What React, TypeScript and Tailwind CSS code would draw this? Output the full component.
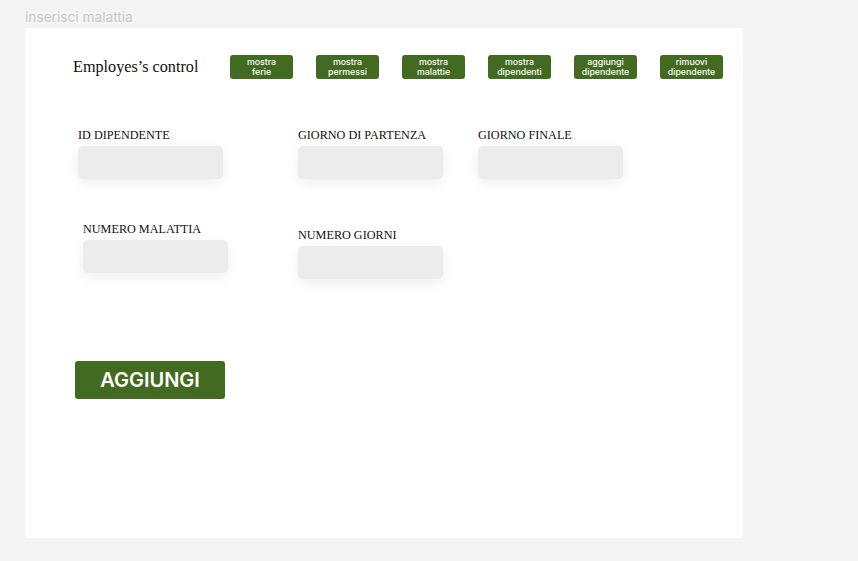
const navButtons = [
  ["mostra", "ferie"],
  ["mostra", "permessi"],
  ["mostra", "malattie"],
  ["mostra", "dipendenti"],
  ["aggiungi", "dipendente"],
  ["rimuovi", "dipendente"],
];

const Field = ({ label, className }: { label: string; className?: string }) => (
  <div className={`flex w-[145px] flex-col ${className ?? ""}`}>
    <label className="whitespace-nowrap font-['Liberation_Serif',serif] text-[12.2px] leading-[14px] text-[#111]">
      {label}
    </label>
    <input
      type="text"
      className="mt-[4px] h-[33px] w-[145px] rounded-[5px] bg-[#ececec] shadow-[0_4px_14px_rgba(0,0,0,0.07)] outline-none"
    />
  </div>
);

export default function App() {
  return (
    <div className="h-[561px] w-[858px] bg-[#f4f4f4] pl-[25px] font-['Inter',sans-serif]">
      <div className="pt-[9px] text-[13.7px] leading-[16px] text-[#c9c9c9]">inserisci malattia</div>
      <div className="mt-[3px] h-[510px] w-[718px] bg-white">
        {/* header */}
        <div className="flex items-center pt-[27px]">
          <h1 className="ml-[48px] w-[157px] font-['Liberation_Serif',serif] text-[16.2px] leading-[24px] text-[#111]">
            Employes’s control
          </h1>
          <div className="flex gap-[23px]">
            {navButtons.map(([a, b]) => (
              <button
                key={a + b}
                className="flex h-[24px] w-[63px] flex-col items-center justify-center rounded-[3px] bg-[#426a20] text-[8.8px] leading-[10.5px] font-medium text-white"
              >
                <span>{a}</span>
                <span>{b}</span>
              </button>
            ))}
          </div>
        </div>

        {/* form */}
        <form onSubmit={(e) => e.preventDefault()}>
          <div className="mt-[49px] flex">
            <Field label="ID DIPENDENTE" className="ml-[53px]" />
            <Field label="GIORNO DI PARTENZA" className="ml-[75px]" />
            <Field label="GIORNO FINALE" className="ml-[35px]" />
          </div>
          <div className="mt-[43px] flex items-start">
            <Field label="NUMERO MALATTIA" className="ml-[58px]" />
            <Field label="NUMERO GIORNI" className="ml-[70px] mt-[6px]" />
          </div>
          <button
            type="submit"
            className="ml-[50px] mt-[82px] h-[38px] w-[150px] rounded-[3px] bg-[#426a20] text-[20px] font-semibold text-white"
          >
            AGGIUNGI
          </button>
        </form>
      </div>
    </div>
  );
}
